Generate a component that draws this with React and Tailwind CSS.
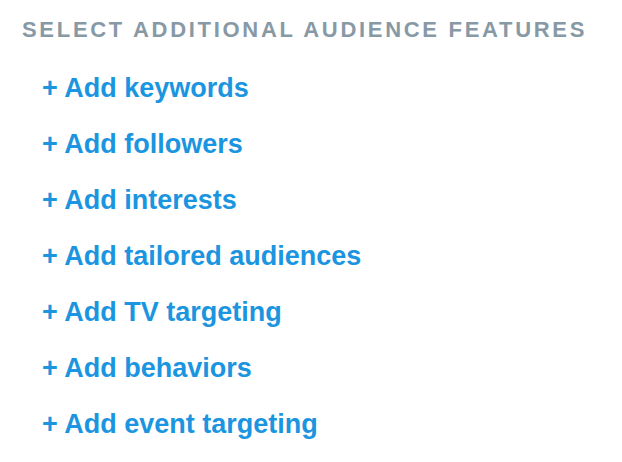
const features = [
  'keywords',
  'followers',
  'interests',
  'tailored audiences',
  'TV targeting',
  'behaviors',
  'event targeting',
];

export default function App() {
  return (
    <div className="min-h-screen bg-white pt-[16px] pl-[22px] font-['Liberation_Sans',Arial,sans-serif]">
      <h2 className="text-[22px] leading-[28px] font-bold tracking-[2.7px] text-[#8899a6] uppercase">
        Select additional audience features
      </h2>
      <ul className="mt-[16px] pl-[20px]">
        {features.map(name => (
          <li key={name}>
            <button className="text-[27px] leading-[56px] font-bold text-[#1b95e0] cursor-pointer">
              + Add {name}
            </button>
          </li>
        ))}
      </ul>
    </div>
  );
}
